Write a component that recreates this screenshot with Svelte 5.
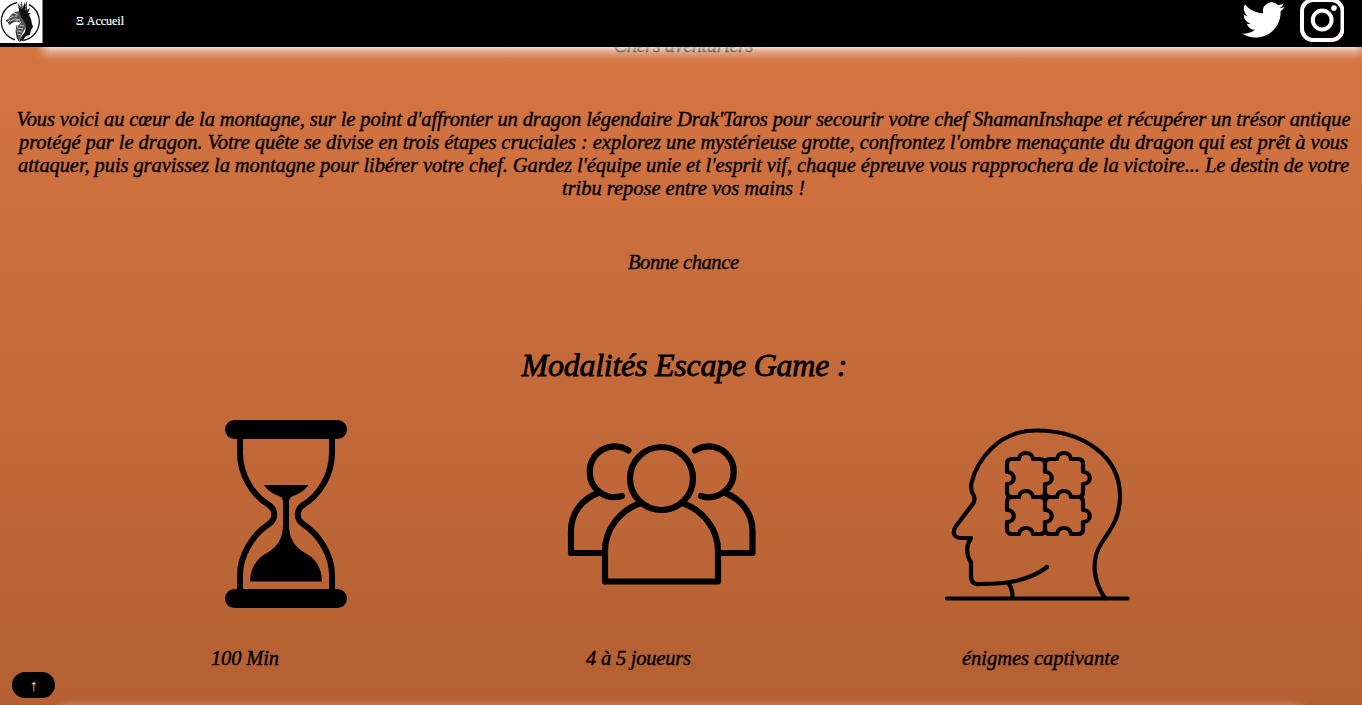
<script lang="ts">
  const story = [
    { text: "Vous voici au cœur de la montagne, sur le point d'affronter un dragon légendaire Drak'Taros pour secourir votre chef ShamanInshape et récupérer un trésor antique", width: 1334 },
    { text: "protégé par le dragon. Votre quête se divise en trois étapes cruciales : explorez une mystérieuse grotte, confrontez l'ombre menaçante du dragon qui est prêt à vous", width: 1329 },
    { text: "attaquer, puis gravissez la montagne pour libérer votre chef. Gardez l'équipe unie et l'esprit vif, chaque épreuve vous rapprochera de la victoire... Le destin de votre", width: 1331 },
    { text: "tribu repose entre vos mains !", width: 243 },
  ];

  // Spreads the letters so that a line fills its measure.
  function fit(node: HTMLElement, width: number) {
    const natural = node.getBoundingClientRect().width;
    const gaps = (node.textContent ?? "").length - 1;
    const spacing = (width - natural) / gaps;
    node.style.letterSpacing = `${spacing}px`;
    node.style.marginRight = `${-spacing}px`;
  }
</script>

<div class="page">
  <header>
    <a class="logo" href="#accueil" aria-label="Dragon">
      <svg viewBox="0 0 43 44" width="43" height="44">
        <rect width="42.500" height="43" fill="#fff" />
        <circle cx="20.300" cy="21.500" r="19" fill="none" stroke="#111" stroke-width="1.300" />
        <path fill="#fff" d="M17 0h12v5H17zM15 39h7v4h-7z" />
        <path fill="#555" d="M7 20l4-5 4-3 5-1 1-9 1 0 1 7 4-8 0 9 2 5-3 12-4 7-3 7-2-3-1-6 2-6 3-4-4-2-4 2-3 3-2-1 2-4-4 2z" />
        <path fill="#111" d="M19 11l-1-8 4 7 3-8 0 9 5-3-2 5 3 0-2 2 2 4 1 5 1 3-2 3-1 5-4 1-3 4-4 2 2-5 4-5 1-6-2-5-3-4z" />
        <path fill="none" stroke="#eee" stroke-width=".7" d="M8 19l5-3 4 0M10 21l5-2 5 1M14 13l4 2M18 28l5 1M17 31l5 1M17 34l4 1M20 25l4 1" />
        <path fill="none" stroke="#111" stroke-width=".8" d="M6 20l3 3 4-1 4-1 3 1M12 14l3 2M17 25l-1 6 1 6 2 4" />
      </svg>
    </a>
    <nav><a href="#accueil">Ξ Accueil</a></nav>
    <div class="social">
      <svg class="bird" viewBox="0 0 24 20" width="43" height="36" aria-label="Twitter">
        <path fill="#fff" d="M23.95 2.57a10 10 0 01-2.82.77 4.96 4.96 0 002.16-2.72c-.95.55-2 .95-3.13 1.19a4.92 4.92 0 00-8.38 4.48C7.69 6.1 4.07 4.13 1.64 1.16a4.92 4.92 0 001.52 6.57 4.9 4.9 0 01-2.23-.61v.06a4.92 4.92 0 003.95 4.83 5 5 0 01-2.21.08 4.94 4.94 0 004.6 3.42A9.87 9.87 0 010 17.54a13.99 13.99 0 007.55 2.21c9.05 0 14-7.5 14-13.98 0-.21 0-.42-.02-.63a9.94 9.94 0 002.42-2.57z" />
      </svg>
      <svg class="insta" viewBox="0 0 44 44" width="44" height="44" aria-label="Instagram">
        <g fill="none" stroke="#fff" stroke-width="4">
          <rect x="2" y="0" width="40.500" height="40" rx="11" />
          <circle cx="22.200" cy="20" r="9.400" />
        </g>
        <circle cx="34" cy="8" r="2.800" fill="#fff" />
      </svg>
    </div>
  </header>

  <main>
    <p class="greeting"><span use:fit={140}>Chers aventuriers</span></p>
    <div class="story">
      {#each story as line}
        <p><span use:fit={line.width}>{line.text}</span></p>
      {/each}
    </div>
    <p class="luck"><span use:fit={111}>Bonne chance</span></p>

    <h2><span use:fit={326}>Modalités Escape Game :</span></h2>

    <section class="terms">
      <article class="time">
        <svg viewBox="210 405 160 215" width="160" height="215" aria-hidden="true">
          <rect x="225" y="420" width="122" height="19" rx="9.500" />
          <rect x="225" y="589" width="122" height="19" rx="9.500" />
          <path fill="none" stroke="#000" stroke-width="6" d="M240 438v15c0 21 12 42 29 52 7 5 7 14 0 19-17 11-29 32-29 51v15M332 438v15c0 21-12 42-29 52-7 5-7 14 0 19 17 11 29 32 29 51v15" />
          <path d="M264 485h44.500c-4 6-10 9-15.500 11-3 1-4 3-4 6v23c0 14 6.500 22 14.500 27 12 6 18 15 18.500 29.500h-72c.5-14.500 7-23.500 18.500-29.500 8-5 14.500-13 14.500-27v-23c0-3-1-5-4-6-6-2-11-5-15-11z" />
        </svg>
        <p><span use:fit={68}>100 Min</span></p>
      </article>
      <article class="players">
        <svg viewBox="555 405 215 215" width="215" height="215" aria-hidden="true">
          <g fill="none" stroke="#000" stroke-width="6.200" stroke-linecap="round" stroke-linejoin="round">
            <circle cx="661.500" cy="478.500" r="31.500" />
            <path d="M605 581.500V551c0-22 15-41 36-48M682 503c21 7 36 26 36 48v30.500H605" />
            <path d="M628.500 450.500A25 25 0 0 0 589.700 472A25 25 0 0 0 622 496M695 450.500A25 25 0 0 1 733.700 472A25 25 0 0 1 701 496" />
            <path d="M598 493c-16 6-27 20-27 38v22h33M725 493c16 6 27.500 20 27.500 38v22H720" />
          </g>
        </svg>
        <p><span use:fit={105}>4 à 5 joueurs</span></p>
      </article>
      <article class="riddles">
        <svg viewBox="935 405 205 215" width="205" height="215" aria-hidden="true">
          <g fill="none" stroke="#000" stroke-width="4.200" stroke-linecap="round" stroke-linejoin="round">
            <path d="M947 598.500h180.500" />
            <path d="M1105 598c-12-17-14-38-4-54 8-13 19-24 19-48 0-40-37-65.500-84-65.500-37 0-59 29-64.500 52.500-1 5-.5 8 2 12 1.500 3 1.500 5 0 8l-17.500 23c-5 8-1 12 6 12h9c-5 7-5 16-1 23l1 1v14c0 6 3 9 9 8 27 0 49-3 67-17M1008.500 583q4 6 4 14" />
            <path d="M1007 472v-8q0-5 5-5h7c1-8 13-8 14 0h7q5 0 5 5v8c9 0 9 12 0 12v8q0 5-5 5h-7c-1-8-13-8-14 0h-7q-5 0-5-5v-8c9 0 9-12 0-12z" />
            <path d="M1045 464q0-5 5-5h7c1-8 13-8 14 0h7q5 0 5 5v8c9 0 9 12 0 12v8q0 5-5 5h-7c-1-8-13-8-14 0h-7q-5 0-5-5" />
            <path d="M1012 497q-5 0-5 5v8c9 0 9 12 0 12v7q0 5 5 5h7c1-8 13-8 14 0h7q5 0 5-5v-7c9 0 9-12 0-12v-8q0-5-5-5" />
            <path d="M1078 497q5 0 5 5v8c9 0 9 12 0 12v7q0 5-5 5h-7c-1-8-13-8-14 0h-7q-5 0-5-5M1045 502q0-5 5-5" />
          </g>
        </svg>
        <p><span use:fit={157}>énigmes captivante</span></p>
      </article>
    </section>
  </main>

  <a class="top" href="#accueil" aria-label="Haut de page">↑</a>
  <div class="next"></div>
</div>

<style>
  :global(body) { margin: 0; overflow: hidden; }
  .page {
    position: relative;
    height: 705px;
    overflow: hidden;
    background: linear-gradient(#d77643, #b46032);
    color: #000;
    font: italic 20.5px/23px "Liberation Serif", serif;
  }
  a { color: inherit; text-decoration: none; }
  p, h2 { margin: 0; font-weight: 400; white-space: nowrap; }
  span { display: inline-block; -webkit-text-stroke: .4px #000; }
  header {
    position: absolute;
    z-index: 2;
    inset: 0 0 auto;
    height: 47px;
    display: flex;
    align-items: flex-start;
    background: #000;
  }
  header::after {
    content: "";
    position: absolute;
    inset: 47px 0 auto 36px;
    height: 16px;
    background: linear-gradient(rgba(255,255,255,.72), rgba(255,255,255,.38) 30%, rgba(255,255,255,.1) 65%, transparent);
    mask-image: linear-gradient(90deg, transparent, #000 14px, #000 calc(100% - 8px), rgba(0,0,0,.6));
  }
  .logo { width: 43px; height: 44px; }
  .logo svg { display: block; }
  nav {
    margin: 13px 0 0 33px;
    color: #fff;
    font: normal 12px/16px "Liberation Serif", serif;
    -webkit-text-stroke: .2px #fff;
  }
  .social { display: flex; gap: 15px; margin: 0 18px 0 auto; }
  .bird { margin-top: 2px; }
  main { display: flex; flex-direction: column; text-align: center; }
  .greeting { margin: 34px 0 0 5px; }
  .story { margin: 51px 0 0 5px; }
  .luck { margin: 51px 0 0 5px; }
  h2 { margin: 70px 0 0 7px; font-size: 32px; line-height: 42px; }
  h2 span { -webkit-text-stroke-width: .8px; }
  .terms { display: flex; height: 300px; margin-top: 19px; }
  article { text-align: left; }
  article svg { display: block; }
  article p { margin-top: 27px; }
  .time { margin-left: 210px; }
  .time p { margin-left: 1px; }
  .players { margin-left: 185px; }
  .players p { margin-left: 31px; }
  .riddles { margin-left: 165px; }
  .riddles p { margin-left: 27px; }
  .top {
    position: absolute;
    left: 12px;
    bottom: 7px;
    width: 43px;
    height: 26px;
    border-radius: 13px;
    background: #000;
    color: #ffe9a8;
    font: normal 16px/27px "Liberation Serif", serif;
    text-align: center;
  }
  .next {
    position: absolute;
    inset: auto 54px 0;
    height: 6px;
    background: linear-gradient(transparent, rgba(255,255,255,.16));
    mask-image: linear-gradient(90deg, transparent, #000 16px, #000 calc(100% - 16px), transparent);
  }
</style>
